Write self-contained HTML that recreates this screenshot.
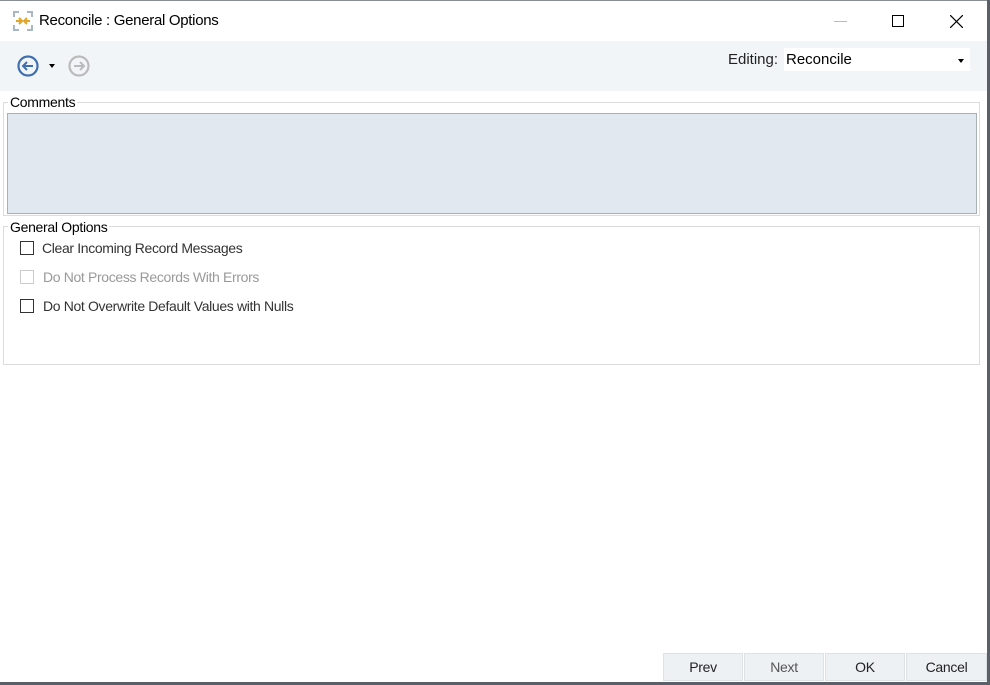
<!DOCTYPE html>
<html><head><style>
*{margin:0;padding:0;box-sizing:border-box}
body{width:990px;height:685px;overflow:hidden;background:#fff;font-family:"Liberation Sans",sans-serif;font-size:13px;color:#000;position:relative}
.a{position:absolute}
.cb{position:absolute;width:14px;height:14px;border:1px solid #333;background:#fff}
.lb{position:absolute;font-size:14px;letter-spacing:-0.35px}
.btn{position:absolute;top:653px;height:28px;background:#eef1f4;border:1px solid #dde2e7;text-align:center;line-height:26px;font-size:14px;color:#222;letter-spacing:-0.3px}
</style></head><body>
<div class="a" style="left:0;top:0;width:990px;height:685px;border-right:3px solid #5b6068;border-bottom:3px solid #5b6068"></div>
<div class="a" style="left:0;top:0;width:987px;height:1px;background:#8a8f96"></div>
<svg class="a" style="left:13px;top:11px" width="20" height="20" viewBox="0 0 20 20"><path d="M1 6V1h5M14 1h5v5M19 14v5h-5M6 19H1v-5" stroke="#a9b6c4" stroke-width="2" fill="none"/><path d="M3 10h5M6 7l3 3-3 3M17 10h-5M14 7l-3 3 3 3" stroke="#e3a325" stroke-width="2" fill="none"/></svg>
<div class="a" style="left:39px;top:12px;font-size:15px;letter-spacing:-0.3px">Reconcile : General Options</div>
<div class="a" style="left:834px;top:21px;width:13px;height:1px;background:#bbb"></div>
<div class="a" style="left:892px;top:15px;width:12px;height:12px;border:1px solid #000"></div>
<svg class="a" style="left:950px;top:15px" width="13" height="13"><path d="M0 0L13 13M13 0L0 13" stroke="#000" stroke-width="1.2"/></svg>
<div class="a" style="left:0;top:41px;width:987px;height:50px;background:#f2f5f8"></div>
<svg class="a" style="left:16px;top:54px" width="24" height="24" viewBox="0 0 24 24"><circle cx="12" cy="12" r="9.5" fill="none" stroke="#3e6fb0" stroke-width="2.2"/><path d="M17 12H7M11 8l-4 4 4 4" stroke="#3e6fb0" stroke-width="2" fill="none"/></svg>
<div class="a" style="left:49px;top:64px;border-left:3px solid transparent;border-right:3px solid transparent;border-top:4px solid #000"></div>
<svg class="a" style="left:67px;top:54px" width="24" height="24" viewBox="0 0 24 24"><circle cx="12" cy="12" r="9.5" fill="none" stroke="#bbb" stroke-width="2.2"/><path d="M7 12h10M13 8l4 4-4 4" stroke="#bbb" stroke-width="2" fill="none"/></svg>
<div class="a" style="left:728px;top:51px;font-size:15px;color:#222">Editing:</div>
<div class="a" style="left:784px;top:48px;width:186px;height:23px;background:#fff"></div>
<div class="a" style="left:786px;top:51px;font-size:15px">Reconcile</div>
<div class="a" style="left:958px;top:59px;border-left:3px solid transparent;border-right:3px solid transparent;border-top:4px solid #000"></div>
<div class="a" style="left:3px;top:102px;width:977px;height:114px;border:1px solid #dcdcdc"></div>
<div class="a" style="left:8px;top:94px;background:#fff;padding:0 2px;font-size:14px;letter-spacing:-0.3px">Comments</div>
<div class="a" style="left:7px;top:113px;width:970px;height:101px;background:#e1e8ef;border:1px solid #a8b0b8"></div>
<div class="a" style="left:3px;top:226px;width:977px;height:139px;border:1px solid #dcdcdc"></div>
<div class="a" style="left:8px;top:219px;background:#fff;padding:0 2px;font-size:14px;letter-spacing:-0.3px">General Options</div>
<div class="cb" style="left:20px;top:241px"></div>
<div class="lb" style="left:42px;top:240px;color:#333">Clear Incoming Record Messages</div>
<div class="cb" style="left:20px;top:270px;border-color:#ccc"></div>
<div class="lb" style="left:43px;top:269px;color:#999">Do Not Process Records With Errors</div>
<div class="cb" style="left:20px;top:299px"></div>
<div class="lb" style="left:43px;top:298px;color:#333">Do Not Overwrite Default Values with Nulls</div>
<div class="btn" style="left:663px;width:80px">Prev</div>
<div class="btn" style="left:744px;width:80px;color:#555">Next</div>
<div class="btn" style="left:825px;width:80px">OK</div>
<div class="btn" style="left:906px;width:81px">Cancel</div>
</body></html>
